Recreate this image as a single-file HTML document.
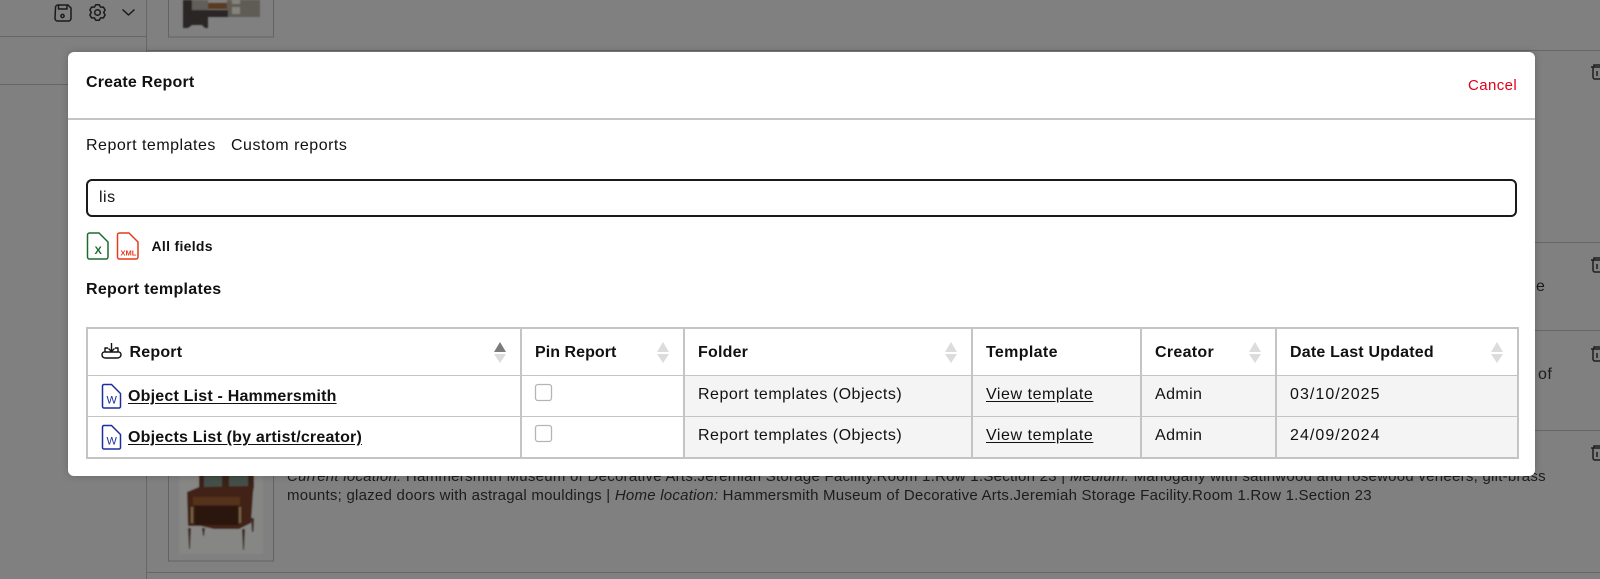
<!DOCTYPE html>
<html><head><meta charset="utf-8"><style>
html,body{margin:0;padding:0;width:1600px;height:579px;overflow:hidden;background:#808080}
body{position:relative;font-family:"Liberation Sans",sans-serif;color:#000}
.t{position:absolute;white-space:nowrap;line-height:20px;font-size:16px;color:#111;letter-spacing:.5px}
.b{font-weight:bold;letter-spacing:.2px}
.d{letter-spacing:1.05px}
.l{position:absolute;background:#666}
.c{position:absolute;background:#c4c4c4}
u{text-underline-offset:2px}
svg{position:absolute;overflow:visible}
</style></head><body>
<div class="l" style="left:0;top:36px;width:146px;height:1px"></div>
<div class="l" style="left:0;top:84px;width:146px;height:1px"></div>
<div class="l" style="left:146px;top:0;width:1px;height:579px"></div>
<div class="l" style="left:146px;top:50px;width:1454px;height:1px"></div>
<div class="l" style="left:146px;top:242px;width:1454px;height:1px"></div>
<div class="l" style="left:146px;top:330px;width:1454px;height:1px"></div>
<div class="l" style="left:146px;top:430px;width:1454px;height:1px"></div>
<div class="l" style="left:146px;top:572px;width:1454px;height:1px"></div>

<svg style="left:0;top:0" width="1600" height="579" fill="none">
 <defs><filter id="bl" x="-5%" y="-5%" width="110%" height="110%"><feGaussianBlur stdDeviation="0.8"/></filter></defs>
 <!-- toolbar icons -->
 <g stroke="#1a1a1a" stroke-width="1.500" stroke-linejoin="round">
  <path d="M55.500 7.500a2.500 2.500 0 0 1 2.500-2.500h10l3 3v10.500a2.500 2.500 0 0 1-2.500 2.500h-11a2.500 2.500 0 0 1-2.500-2.500z"/>
  <path d="M58.500 5.500v3.500h8.500V5.500"/><circle cx="62.500" cy="16" r="1.600"/>
  <path transform="translate(97.500 12.500)" d="M-1.700-7.800L1.700-7.800L3.100-5.400L5.940-5.350L7.600-2.470L6.200 0L7.600 2.470L5.940 5.350L3.100 5.400L1.700 7.800L-1.700 7.800L-3.100 5.400L-5.940 5.350L-7.600 2.470L-6.200 0L-7.600-2.470L-5.940-5.350L-3.100-5.400Z"/>
  <circle cx="97.500" cy="12.500" r="2.800"/>
  <path d="M122.500 9.500l6 5.500 6-5.500" stroke-width="1.500"/>
 </g>
 <!-- thumbnails -->
 <rect x="168.500" y="-5" width="105" height="42" stroke="#636363"/>
 <g filter="url(#bl)">
  <rect x="192" y="0" width="16" height="10" fill="#625e5a"/>
  <rect x="208" y="3" width="20" height="6" fill="#5a3a22"/>
  <rect x="227" y="0" width="33" height="17" fill="#5e5c55"/>
  <rect x="232" y="7" width="8" height="7" fill="#85837a"/>
  <rect x="232" y="0" width="8" height="4" fill="#85837a"/>
  <path d="M183 0h9v10h36v7h-20v11h-3l-3-3h-10l-4 3h-5z" fill="#2b2725"/>
 </g>
 <rect x="168.500" y="460" width="105" height="101" stroke="#636363"/>
 <g filter="url(#bl)">
  <rect x="179" y="460" width="84" height="94" fill="#868684"/>
  <rect x="199" y="460" width="55" height="28" fill="#3a2015"/>
  <rect x="204" y="476" width="18" height="12" fill="#454f4a"/>
  <rect x="229" y="476" width="19" height="12" fill="#454f4a"/>
  <path d="M187 492l12-5 55-1-1 7-2 30-12 6h-25l-13-3h-13z" fill="#432214"/>
  <rect x="193" y="497" width="47" height="8" fill="#55301e"/>
  <rect x="195" y="506" width="43" height="19" fill="#2c1710"/>
  <path d="M188 528h3l-1 21h-1zM242 529h3l-1 21h-1zM202 528h3l-1 8h-1zM251 518h3l-.5 14h-1.500z" fill="#3a261d"/>
  <rect x="191" y="507" width="2" height="16" fill="#756845"/>
  <rect x="239" y="507" width="2" height="16" fill="#756845"/>
 </g>
 <!-- trash -->
 <g stroke="#1f1f1f" stroke-width="1.500">
  <path d="M1591 67h9M1594 67v-2h6M1593 67v10a2 2 0 0 0 2 2h5M1597 71v5"/>
  <path transform="translate(0 193)" d="M1591 67h9M1594 67v-2h6M1593 67v10a2 2 0 0 0 2 2h5M1597 71v5"/>
  <path transform="translate(0 282)" d="M1591 67h9M1594 67v-2h6M1593 67v10a2 2 0 0 0 2 2h5M1597 71v5"/>
  <path transform="translate(0 381)" d="M1591 67h9M1594 67v-2h6M1593 67v10a2 2 0 0 0 2 2h5M1597 71v5"/>
 </g>
</svg>

<div class="t" style="left:1536px;top:277px;color:#1c1c1c">e</div>
<div class="t" style="left:1538px;top:365px;color:#1c1c1c">of</div>
<div class="t" style="left:287px;top:467px;color:#1c1c1c;font-size:15px;letter-spacing:.26px"><i>Current location:</i> Hammersmith Museum of Decorative Arts.Jeremiah Storage Facility.Room 1.Row 1.Section 23 | <i>Medium:</i> Mahogany with satinwood and rosewood veneers, gilt-brass</div>
<div class="t" style="left:287px;top:486px;color:#1c1c1c;font-size:15px;letter-spacing:.24px">mounts; glazed doors with astragal mouldings | <i>Home location:</i> Hammersmith Museum of Decorative Arts.Jeremiah Storage Facility.Room 1.Row 1.Section 23</div>

<!-- modal -->
<div style="position:absolute;left:68px;top:52px;width:1467px;height:424px;background:#fff;border-radius:6px;box-shadow:0 0 8px rgba(0,0,0,.2)"></div>
<div class="c" style="left:68px;top:118px;width:1467px;height:2px"></div>
<div class="t b" style="left:86px;top:73px">Create Report</div>
<div class="t" style="left:1468px;top:76px;color:#e2001a;font-size:15px;letter-spacing:.4px">Cancel</div>
<div class="t" style="left:86px;top:136px">Report templates</div>
<div class="t" style="left:231px;top:136px">Custom reports</div>
<div style="position:absolute;left:86px;top:179px;width:1427px;height:34px;border:2px solid #1a1a1a;border-radius:6px"></div>
<div class="t" style="left:99px;top:188px">lis</div>

<svg style="left:0;top:0" width="1600" height="579" fill="none">
 <path d="M87.500 235a2 2 0 0 1 2-2h9.500l9 9v15a2 2 0 0 1-2 2h-16.500a2 2 0 0 1-2-2z" stroke="#1c6b2c" stroke-width="1.500"/>
 <path d="M117.500 235a2 2 0 0 1 2-2h9.500l9 9v15a2 2 0 0 1-2 2h-16.500a2 2 0 0 1-2-2z" stroke="#e63a1a" stroke-width="1.500"/>
 <text x="94.500" y="254" font-family="Liberation Sans" font-size="11" font-weight="bold" fill="#1c6b2c">X</text>
 <text x="120.500" y="255.500" font-family="Liberation Sans" font-size="7.500" font-weight="bold" fill="#e63a1a">XML</text>
</svg>
<div class="t b" style="left:151.500px;top:236px;font-size:14px;letter-spacing:.3px">All fields</div>
<div class="t b" style="left:86px;top:280px;letter-spacing:.3px">Report templates</div>

<!-- table -->
<div style="position:absolute;left:683px;top:375px;width:835px;height:83px;background:#f4f4f4"></div>
<div class="c" style="left:86px;top:327px;width:1433px;height:2px"></div>
<div class="c" style="left:86px;top:457px;width:1433px;height:2px"></div>
<div class="c" style="left:86px;top:327px;width:2px;height:132px"></div>
<div class="c" style="left:1517px;top:327px;width:2px;height:132px"></div>
<div class="c" style="left:86px;top:375px;width:1433px;height:1px"></div>
<div class="c" style="left:86px;top:416px;width:1433px;height:1px"></div>
<div class="c" style="left:520px;top:327px;width:2px;height:132px"></div>
<div class="c" style="left:683px;top:327px;width:2px;height:132px"></div>
<div class="c" style="left:971px;top:327px;width:2px;height:132px"></div>
<div class="c" style="left:1140px;top:327px;width:2px;height:132px"></div>
<div class="c" style="left:1275px;top:327px;width:2px;height:132px"></div>

<svg style="left:0;top:0" width="1600" height="579" fill="none">
 <g stroke="#111" stroke-width="1.400" stroke-linejoin="round">
  <path d="M105 352v-4h3M115 348h3v4M111.500 343v8M108.500 348.500l3 3 3-3"/>
  <path d="M105 352h13a2.500 2.500 0 0 1 3 2.500c0 2.500-2 3.500-4 3.500h-11.500c-2 0-3.500-1-3.500-3.500a2.500 2.500 0 0 1 3-2.500z"/>
 </g>
 <g fill="#dcdcdc">
  <path d="M494 352l6-10 6 10z" fill="#7b7b7b"/><path d="M494 354l6 9 6-9z"/>
  <path d="M657 352l6-10 6 10zM657 354l6 9 6-9z"/>
  <path d="M945 352l6-10 6 10zM945 354l6 9 6-9z"/>
  <path d="M1249 352l6-10 6 10zM1249 354l6 9 6-9z"/>
  <path d="M1491 352l6-10 6 10zM1491 354l6 9 6-9z"/>
 </g>
 <path d="M102.500 386a1.500 1.500 0 0 1 1.500-1.500h7.500l9 9v13a1.500 1.500 0 0 1-1.500 1.500h-15a1.500 1.500 0 0 1-1.500-1.500z" stroke="#1a2f9c" stroke-width="1.500"/>
 <path d="M102.500 427a1.500 1.500 0 0 1 1.500-1.500h7.500l9 9v13a1.500 1.500 0 0 1-1.500 1.500h-15a1.500 1.500 0 0 1-1.500-1.500z" stroke="#1a2f9c" stroke-width="1.500"/>
 <text x="106.500" y="403.500" font-family="Liberation Sans" font-size="11" fill="#1a2f9c">W</text>
 <text x="106.500" y="444.500" font-family="Liberation Sans" font-size="11" fill="#1a2f9c">W</text>
 <rect x="535.500" y="384.500" width="16" height="16" rx="2.500" stroke="#b5b5b5" stroke-width="1.300" fill="#fff"/>
 <rect x="535.500" y="425.500" width="16" height="16" rx="2.500" stroke="#b5b5b5" stroke-width="1.300" fill="#fff"/>
</svg>

<div class="t b" style="left:129.500px;top:343px">Report</div>
<div class="t b" style="left:535px;top:343px;letter-spacing:.05px">Pin Report</div>
<div class="t b" style="left:698px;top:343px">Folder</div>
<div class="t b" style="left:986px;top:343px;letter-spacing:.35px">Template</div>
<div class="t b" style="left:1155px;top:343px;letter-spacing:.3px">Creator</div>
<div class="t b" style="left:1290px;top:343px">Date Last Updated</div>

<div class="t b" style="left:128px;top:387px"><u>Object List - Hammersmith</u></div>
<div class="t b" style="left:128px;top:428px"><u>Objects List (by artist/creator)</u></div>
<div class="t" style="left:698px;top:385px">Report templates (Objects)</div>
<div class="t" style="left:698px;top:426px">Report templates (Objects)</div>
<div class="t" style="left:986px;top:385px;letter-spacing:.55px"><u>View template</u></div>
<div class="t" style="left:986px;top:426px;letter-spacing:.55px"><u>View template</u></div>
<div class="t" style="left:1155px;top:385px;letter-spacing:.4px">Admin</div>
<div class="t" style="left:1155px;top:426px;letter-spacing:.4px">Admin</div>
<div class="t d" style="left:1290px;top:385px">03/10/2025</div>
<div class="t d" style="left:1290px;top:426px">24/09/2024</div>
</body></html>
